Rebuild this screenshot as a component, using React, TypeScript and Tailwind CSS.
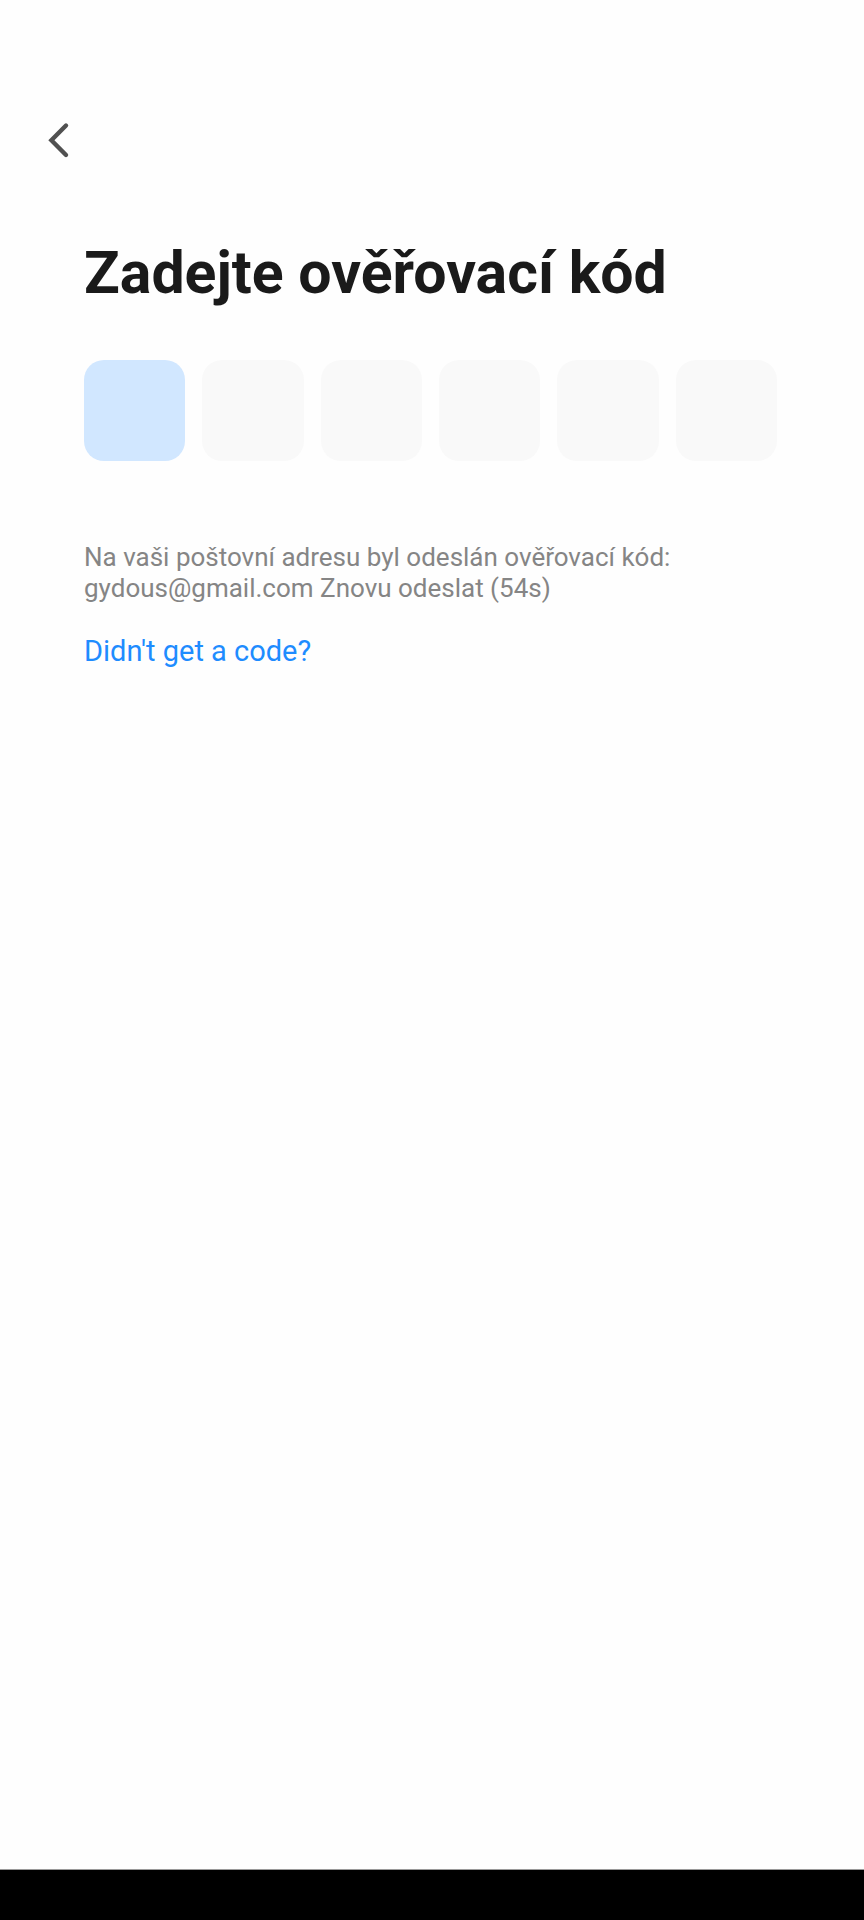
import { useRef, useState } from 'react'
import type { ChangeEvent, KeyboardEvent } from 'react'

const CODE_LENGTH = 6

function BackIcon() {
  return (
    <svg viewBox="0 0 40 40" className="size-10" fill="none" stroke="#505050" strokeWidth="4.4" strokeLinecap="round" strokeLinejoin="miter" aria-hidden="true">
      <path d="M28 5.5 13.4 20.2 28 35" />
    </svg>
  )
}

function CodeInput() {
  const [code, setCode] = useState<string[]>(Array(CODE_LENGTH).fill(''))
  const [active, setActive] = useState(0);
  const inputs = useRef<(HTMLInputElement | null)[]>([])

  function handleChange(e: ChangeEvent<HTMLInputElement>, index: number) {
    const digit = e.target.value.replace(/\D/g, '').slice(-1)
    setCode(code.map((el, i) => (i === index ? digit : el)))
    if (digit) inputs.current[index + 1]?.focus()
  }

  function handleKeyDown(e: KeyboardEvent<HTMLInputElement>, index: number) {
    if (e.key === 'Backspace' && !code[index]) inputs.current[index - 1]?.focus()
  }

  return (
    <div className="mt-[52px] grid grid-cols-6 gap-[17px]">
      {code.map((digit, index) => (
        <input
          key={index}
          ref={(el) => { inputs.current[index] = el }}
          type="text"
          inputMode="numeric"
          aria-label={`Číslice ${index + 1}`}
          value={digit}
          onChange={(e) => handleChange(e, index)}
          onKeyDown={(e) => handleKeyDown(e, index)}
          onFocus={() => setActive(index)}
          className={`aspect-square w-full rounded-[20px] text-center text-5xl text-[#1a1a1a] outline-none ${index === active ? 'bg-[#d1e7ff]' : 'bg-[#f9f9f9]'}`}
        />
      ))}
    </div>
  )
}

export default function App() {
  return (
    <div className="flex min-h-screen flex-col bg-[#fefefe] font-[Roboto,sans-serif]">
      <header className="px-[38px] pt-[120px]">
        <button type="button" aria-label="Zpět" className="block">
          <BackIcon />
        </button>
      </header>
      <main className="flex-1 pt-[78px] pr-[87px] pl-[84px]">
        <h1 className="text-[59px] leading-[70px] font-bold text-[#1a1a1a]">Zadejte ověřovací kód</h1>
        <CodeInput />
        <p className="mt-[81px] text-[26px] leading-[31px] text-[#858585]">
          Na vaši poštovní adresu byl odeslán ověřovací kód:
          <br />
          gydous@gmail.com Znovu odeslat (54s)
        </p>
        <a href="#" className="mt-[30px] inline-block text-[29px] leading-[34px] text-[#1e8cff]">Didn't get a code?</a>
      </main>
      {/* system navigation bar */}
      <footer className="h-[51px] border-t border-[#999999] bg-black" />
    </div>
  )
}
